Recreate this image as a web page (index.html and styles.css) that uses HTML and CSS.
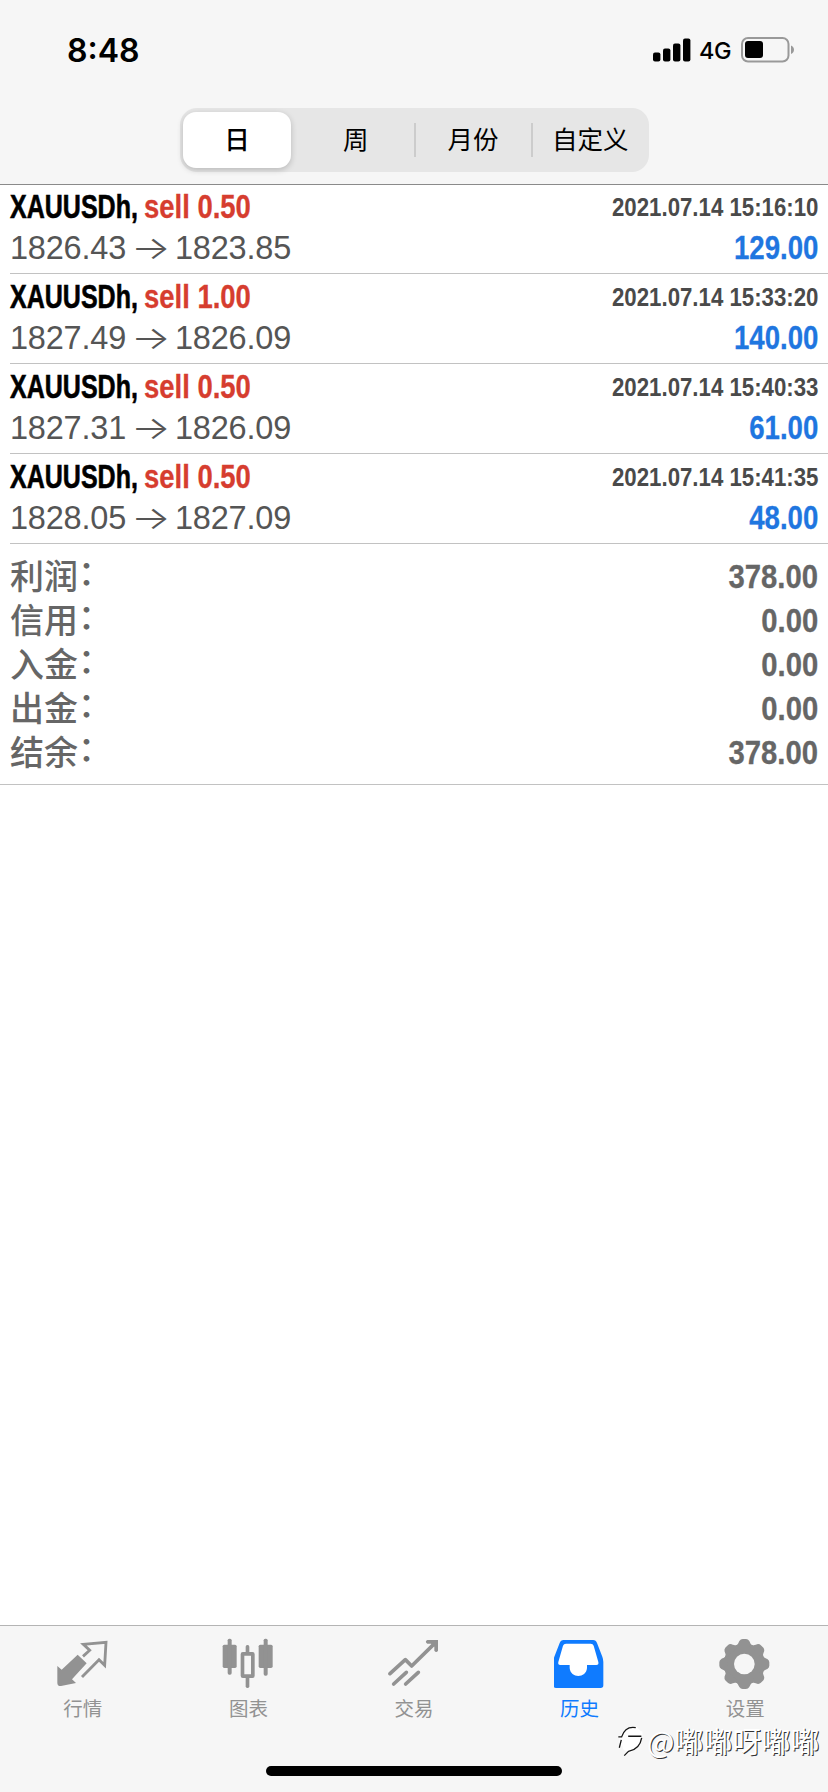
FILE: index.html
```html
<!DOCTYPE html>
<html lang="zh-CN">
<head>
<meta charset="utf-8">
<title>历史</title>
<link rel="stylesheet" href="styles.css">
</head>
<body>
<div class="screen">
  <header class="header">
    <div class="status">
      <span class="clock">8:48</span>
      <div class="status-right">
        <svg class="signal" viewBox="0 0 38 24"><rect x="0" y="14.5" width="7.4" height="9" rx="2"/><rect x="10" y="10.5" width="7.4" height="13" rx="2"/><rect x="20" y="5.5" width="7.4" height="18" rx="2"/><rect x="30" y="0.5" width="7.4" height="23" rx="2"/></svg>
        <span class="network">4G</span>
        <svg class="battery" viewBox="0 0 54 26"><rect x="1" y="1" width="46.5" height="23.5" rx="6" fill="none" stroke="#999" stroke-width="2"/><rect x="4" y="4" width="18" height="17" rx="3"/><path d="M50 8.5c4 1.500 4 7 0 8.500z" fill="#999"/></svg>
      </div>
    </div>
    <nav class="segments">
      <span class="segment selected">日</span>
      <span class="segment">周</span>
      <span class="segment divided">月份</span>
      <span class="segment divided">自定义</span>
    </nav>
  </header>
  <main class="content">
    <section class="deal">
      <div class="line top"><span class="name">XAUUSDh,</span><span class="side">sell 0.50</span><span class="time">2021.07.14 15:16:10</span></div>
      <div class="line bottom"><span class="price">1826.43</span><span class="arrow">→</span><span class="price">1823.85</span><span class="profit">129.00</span></div>
    </section>
    <section class="deal">
      <div class="line top"><span class="name">XAUUSDh,</span><span class="side">sell 1.00</span><span class="time">2021.07.14 15:33:20</span></div>
      <div class="line bottom"><span class="price">1827.49</span><span class="arrow">→</span><span class="price">1826.09</span><span class="profit">140.00</span></div>
    </section>
    <section class="deal">
      <div class="line top"><span class="name">XAUUSDh,</span><span class="side">sell 0.50</span><span class="time">2021.07.14 15:40:33</span></div>
      <div class="line bottom"><span class="price">1827.31</span><span class="arrow">→</span><span class="price">1826.09</span><span class="profit">61.00</span></div>
    </section>
    <section class="deal">
      <div class="line top"><span class="name">XAUUSDh,</span><span class="side">sell 0.50</span><span class="time">2021.07.14 15:41:35</span></div>
      <div class="line bottom"><span class="price">1828.05</span><span class="arrow">→</span><span class="price">1827.09</span><span class="profit">48.00</span></div>
    </section>
    <section class="summary">
      <div class="total"><span class="label">利润<span class="colon">：</span></span><span class="value">378.00</span></div>
      <div class="total"><span class="label">信用<span class="colon">：</span></span><span class="value">0.00</span></div>
      <div class="total"><span class="label">入金<span class="colon">：</span></span><span class="value">0.00</span></div>
      <div class="total"><span class="label">出金<span class="colon">：</span></span><span class="value">0.00</span></div>
      <div class="total"><span class="label">结余<span class="colon">：</span></span><span class="value">378.00</span></div>
    </section>
  </main>
  <footer class="footer">
    <nav class="tabs">
      <div class="tab">
        <svg viewBox="170 84 156 156"><path fill="currentColor" d="M171 168L184 179L232 134L259 160L215 208L227 219L182 228Q171 229 171 218Z"/><path fill="none" stroke="currentColor" stroke-width="8.500" d="M248 139L268 121L249 103L317 97L313 166L296 149L245 201"/></svg>
        <span>行情</span>
      </div>
      <div class="tab">
        <svg viewBox="667 84 156 156"><g fill="currentColor"><rect x="669" y="104" width="42" height="70" rx="5"/><rect x="777" y="104" width="42" height="70" rx="5"/><rect x="684" y="86" width="12" height="108" rx="5"/><rect x="792" y="86" width="12" height="111" rx="5"/><rect x="738" y="105" width="11" height="26" rx="5"/><rect x="738" y="198" width="11" height="36" rx="5"/></g><rect x="728.500" y="131.500" width="31" height="67" rx="1" fill="none" stroke="currentColor" stroke-width="11" stroke-linejoin="round"/></svg>
        <span>图表</span>
      </div>
      <div class="tab">
        <svg viewBox="174 84 156 156"><g fill="none" stroke="currentColor" stroke-width="11" stroke-linecap="round" stroke-linejoin="round"><path d="M180 191L226 149L245 168L314 100"/><path d="M191 222L229 187M227 222L265 187"/></g><path fill="currentColor" d="M292 90H324V122Q319 130 313 122V110L303 101H292Q283 95 292 90Z"/></svg>
        <span>交易</span>
      </div>
      <div class="tab active">
        <svg viewBox="671 84 156 156"><path fill="currentColor" d="M700 90H788Q797 90 800 99L816 140Q819 148 819 156V226Q819 234 811 234H677Q669 234 669 226V156Q669 148 672 140L688 99Q691 90 700 90Z"/><path fill="#fff" d="M707 101H781Q788 101 790 107L804 156Q806 165 798 165H770V174C768 206 720 206 718 174V165H690Q682 165 684 156L698 107Q700 101 707 101Z"/></svg>
        <span>历史</span>
      </div>
      <div class="tab">
        <svg viewBox="476 84 156 156"><g fill="currentColor"><circle cx="552" cy="162" r="62"/><g id="teeth"><path id="tooth" d="M523 112C533 104 534 99 537 93Q541 87 547 87H557Q563 87 567 93C570 99 571 104 581 112Z"/><use href="#tooth" transform="rotate(45 552 162)"/><use href="#tooth" transform="rotate(90 552 162)"/><use href="#tooth" transform="rotate(135 552 162)"/></g><use href="#teeth" transform="rotate(180 552 162)"/></g><circle cx="552" cy="162" r="31" fill="#f6f6f6"/></svg>
        <span>设置</span>
      </div>
    </nav>
    <div class="home"></div>
    <div class="watermark">
      <svg viewBox="0 0 76 100"><path fill="#fff" d="M4 42C14 16 30 4 56 8L70 22H74C78 56 52 84 22 96L30 82C18 82 12 76 14 64L6 72Z"/><path fill="none" stroke="#161616" stroke-width="4" d="M1 39H11C18 18 32 7 54 11M10 48L4 72M31 37H71M72 42C68 66 54 79 32 83L19 96"/></svg>
      <span>@嘟嘟呀嘟嘟</span>
    </div>
  </footer>
</div>
</body>
</html>
```
FILE: styles.css
```css
body {
  margin: 0;
  background: #fff;
  font-family: "Liberation Sans", "Noto Sans CJK SC", sans-serif;
}
.screen {
  width: 828px;
  height: 1792px;
  display: flex;
  flex-direction: column;
  overflow: hidden;
}
.header {
  box-sizing: border-box;
  height: 185px;
  flex: none;
  background: #f6f6f6;
  border-bottom: 1px solid #8a8a8a;
}
.status {
  height: 108px;
  display: flex;
  justify-content: space-between;
  box-sizing: border-box;
  padding: 30px 33px 0 67px;
  font-family: Inter, sans-serif;
}
.clock {
  font-size: 32px;
  line-height: 41px;
  font-weight: 600;
}
.status-right {
  display: flex;
  align-items: center;
  height: 40px;
}
.signal { width: 38px; height: 24px; margin-right: 8px; }
.network { font-size: 23.500px; font-weight: 500; width: 34px; margin-right: 8px; letter-spacing: -0.300px; white-space: nowrap; }
.battery { width: 54px; height: 26px; }
.segments {
  box-sizing: border-box;
  width: 469px;
  height: 64px;
  margin-left: 180px;
  padding: 4px 0;
  display: grid;
  grid-template-columns: repeat(4, 1fr);
  background: #e6e6e6;
  border-radius: 17px;
}
.segment {
  position: relative;
  font: 25.500px/52px "Noto Sans CJK SC", sans-serif;
  text-align: center;
  height: 56px;
}
.selected {
  margin: 0 6px 0 3px;
  background: #fff;
  border-radius: 13px;
  font-weight: 500;
  box-shadow: 0 2px 6px rgba(0, 0, 0, .2);
}
.divided::before {
  content: "";
  position: absolute;
  left: -1px;
  top: 11px;
  width: 2px;
  height: 34px;
  background: #ccc;
}
.deal {
  box-sizing: border-box;
  height: 90px;
  margin-left: 10px;
  padding: 3px 10px 0 0;
  border-bottom: 1px solid #c2c2c2;
}
.deal:first-child { height: 89px; padding-top: 2px; }
.line {
  display: grid;
  height: 41px;
  line-height: 41px;
  white-space: nowrap;
}
.top { grid-template-columns: 134px 1fr 1fr; font-weight: 700; }
.bottom { grid-template-columns: 121px 44px 124px 1fr; }
.name, .side { font-size: 32.500px; transform-origin: left; justify-self: start; }
.name { transform: scaleX(.77); -webkit-text-stroke: .6px #000; }
.side { transform: scaleX(.845); color: #d63d2f; -webkit-text-stroke: .3px #d63d2f; }
.time {
  justify-self: end;
  font-size: 26px;
  color: #4a4a4a;
  transform: scaleX(.855);
  transform-origin: right;
}
.price { font-size: 32.500px; color: #555; letter-spacing: -.2px; }
.arrow {
  font: 300 32px/40px Inter, sans-serif;
  color: #555;
  justify-self: start;
  transform-origin: left;
  transform: scaleX(1.3);
}
.profit {
  justify-self: end;
  font-size: 32.500px;
  font-weight: 700;
  color: #1f76e0;
  transform: scaleX(.85);
  transform-origin: right;
  -webkit-text-stroke: .3px #1f76e0;
}
.summary {
  box-sizing: border-box;
  height: 241px;
  padding: 10px 10px 0;
  border-bottom: 1px solid #c2c2c2;
  color: #666;
}
.total {
  display: flex;
  justify-content: space-between;
  height: 44px;
  line-height: 44px;
}
.label { font-size: 34px; line-height: 46px; font-weight: 500; }
.colon { display: inline-block; line-height: 1; transform: translate(0, -4px); }
.value { font-size: 34px; font-weight: 700; transform: scaleX(.86); transform-origin: right; -webkit-text-stroke: .3px #666; }
.footer {
  position: relative;
  box-sizing: border-box;
  height: 167px;
  margin-top: auto;
  flex: none;
  background: #f6f6f6;
  border-top: 1px solid #b4b4b4;
  padding-top: 12px;
}
.tabs {
  display: grid;
  grid-template-columns: repeat(5, 1fr);
  height: 128px;
}
.tab {
  display: flex;
  flex-direction: column;
  align-items: center;
  color: #929292;
  font: 19.500px/30px "Noto Sans CJK SC", sans-serif;
}
.tab svg { width: 52px; height: 52px; margin-bottom: 3px; }
.active { color: #0f7bff; }
.home {
  width: 296px;
  height: 10px;
  margin-left: 266px;
  border-radius: 5px;
  background: #000;
}
.watermark {
  position: absolute;
  left: 618px;
  top: 98px;
  display: flex;
  white-space: nowrap;
  color: #fff;
  font: 29px/32px "Noto Sans CJK SC", sans-serif;
  text-shadow: 1px 1px 0 #333;
}
.watermark svg { width: 25px; height: 33px; margin-right: 4px; }
```
